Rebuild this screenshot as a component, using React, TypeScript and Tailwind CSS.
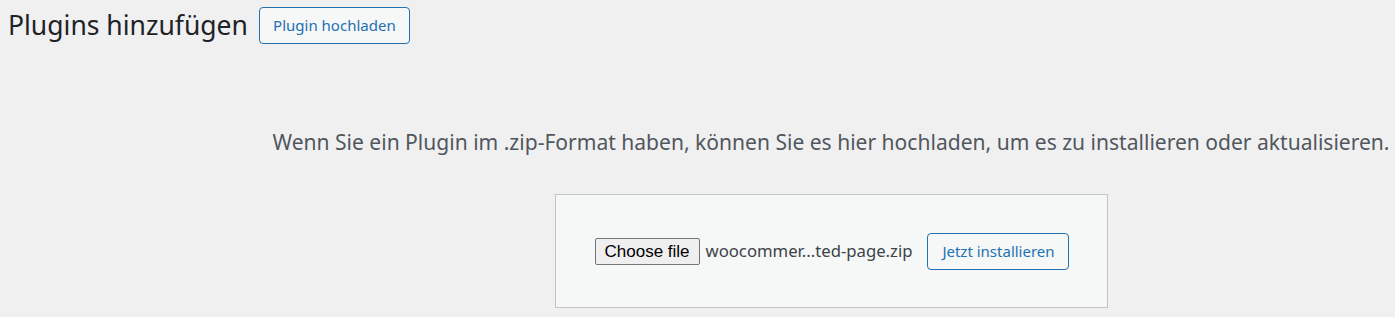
const App = () => {
  return (
    <div className="w-full h-[317px] overflow-hidden bg-[#f0f0f1] font-['Noto_Sans',sans-serif]">
      <div className="w-[1662px]">
        {/* header */}
        <div className="flex items-center pl-[8px] pt-[7px] h-[44px]">
          <h1 className="text-[26.5px] leading-[37px] text-[#1d2327] font-normal">
            Plugins hinzufügen
          </h1>
          <button className="ml-[11px] h-[37px] w-[151px] rounded-[4px] border border-[#2271b1] bg-[#f6f7f7] text-[15px] text-[#2271b1]">
            Plugin hochladen
          </button>
        </div>

        {/* upload area */}
        <div className="flex flex-col items-center">
          <p className="mt-[84px] text-[21.05px] leading-[28px] text-[#50575e]">
            Wenn Sie ein Plugin im .zip-Format haben, können Sie es hier hochladen, um es zu installieren oder aktualisieren.
          </p>
          <div className="mt-[38px] w-[553px] h-[114px] border border-[#c3c4c7] bg-[#f6f7f7] flex items-center justify-center">
            <div className="flex items-center ml-[2px]">
              <span className="h-[27px] px-[9px] border border-[#767676] rounded-[2px] bg-[#efefef] text-[17px] leading-[25px] text-black font-['Liberation_Sans',sans-serif]">
                Choose file
              </span>
              <span className="ml-[6px] text-[16.7px] text-[#3c434a]">
                woocommer...ted-page.zip
              </span>
              <button className="ml-[15px] h-[37px] w-[142px] rounded-[4px] border border-[#2271b1] bg-[#f6f7f7] text-[15px] text-[#2271b1]">
                Jetzt installieren
              </button>
            </div>
          </div>
        </div>
      </div>
    </div>
  );
};

export default App;
